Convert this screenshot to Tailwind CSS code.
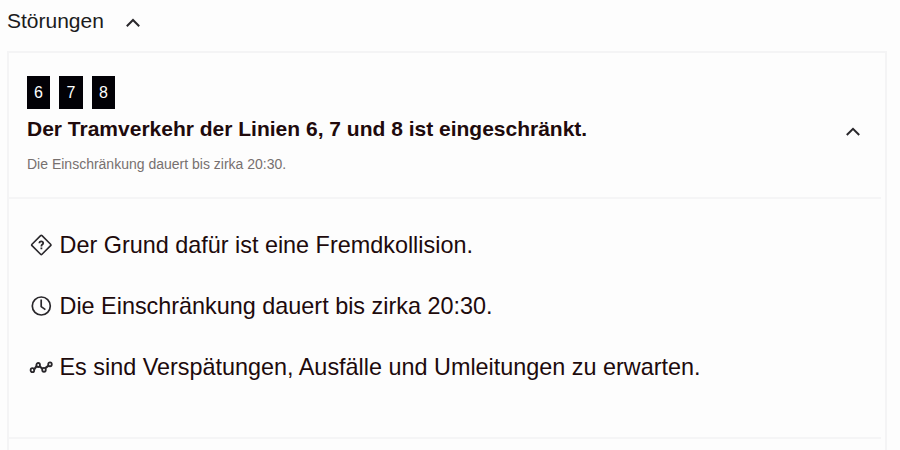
<!DOCTYPE html>
<html lang="de">
<head>
    <meta charset="UTF-8">
    <meta name="viewport" content="width=device-width, initial-scale=1.0">
    <title>Störungen</title>
    <script src="https://cdn.jsdelivr.net/npm/@tailwindcss/browser@4"></script>
</head>
<body class="h-[450px] overflow-hidden bg-[#fdfdfd] pl-[7px] font-['Liberation_Sans',Arial,sans-serif] text-[#200a0c]">
    <!-- Section header -->
    <header class="flex h-[51px] items-start gap-[22px] pt-[5px]">
        <h1 class="text-[21px] leading-8 text-[#1b1b20]">Störungen</h1>
        <svg class="mt-[13px] h-[9px] w-[14px]" viewBox="0 0 14 9" fill="none" stroke="#29272b" stroke-width="2">
            <path d="M.8 8.2 7 2 13.2 8.2" />
        </svg>
    </header>

    <main class="h-[420px] w-[880px] border-2 border-[#f4f4f5]">
        <!-- Disruption summary -->
        <section class="mr-1 flex h-[146px] justify-between border-b-2 border-[#f5f5f6] pt-[23px] pl-[18px]">
            <div>
                <div class="flex gap-[9px] text-base leading-[33px] text-white">
                    <span class="h-[33px] w-[23px] bg-[#020106] text-center leading-[33px]">6</span>
                    <span class="h-[33px] w-[24px] bg-[#020106] text-center leading-[33px]">7</span>
                    <span class="h-[33px] w-[23px] bg-[#020106] text-center leading-[33px]">8</span>
                </div>
                <h2 class="mt-1 text-[21px] leading-8 font-bold">Der Tramverkehr der Linien 6, 7 und 8 ist eingeschränkt.</h2>
                <p class="mt-[7px] text-[14px] leading-6 text-[#77706f]">Die Einschränkung dauert bis zirka 20:30.</p>
            </div>
            <svg class="mt-[51px] mr-[21px] h-[9px] w-[14px]" viewBox="0 0 14 9" fill="none" stroke="#29272b" stroke-width="2">
                <path d="M.8 8 7 1.8 13.2 8" />
            </svg>
        </section>

        <!-- Details -->
        <section class="mr-1 h-[240px] border-b-2 border-[#f5f5f6] pt-[26px] pl-[20px] text-[23.4px] leading-[40px]">
            <ul class="flex flex-col gap-[21px]">
                <li class="flex items-center gap-[6.5px]">
                    <svg class="h-6 w-6" viewBox="0 0 24 24" fill="none" stroke="#29272b" stroke-width="1.6" stroke-linejoin="round">
                        <path d="M11.6 2.6Q12.3 1.9 13 2.6L21.6 11.2Q22.3 11.9 21.6 12.6L13 21.2Q12.3 21.9 11.6 21.2L3 12.6Q2.3 11.9 3 11.2Z" />
                        <path d="M10.4 10.2Q10.3 8.3 12.2 8.3T14.2 10Q14.2 11 13 11.8Q12.4 12.3 12.4 13.5M12.4 14.5V16.3" stroke-width="1.8" />
                    </svg>
                    <span>Der Grund dafür ist eine Fremdkollision.</span>
                </li>
                <li class="flex items-center gap-[6.5px]">
                    <svg class="h-6 w-6" viewBox="0 0 24 24" fill="none" stroke="#29272b" stroke-width="1.7">
                        <circle cx="12.3" cy="12" r="9" />
                        <path d="M12.2 5.6V12.6L16.4 15.6" />
                    </svg>
                    <span>Die Einschränkung dauert bis zirka 20:30.</span>
                </li>
                <li class="flex items-center gap-[6.5px]">
                    <svg class="h-6 w-6" viewBox="0 0 24 24" fill="none" stroke="#29272b" stroke-width="1.8">
                        <ellipse cx="3.4" cy="15.2" rx="1.8" ry="2" />
                        <ellipse cx="9.2" cy="10" rx="1.8" ry="2" />
                        <ellipse cx="15" cy="14.8" rx="1.8" ry="2" />
                        <ellipse cx="21" cy="9.3" rx="1.8" ry="2" />
                        <path d="M5 14.6 7.6 11.2M10.6 11.2 13.4 13.8M16.3 13.2 19.6 10.6" stroke-width="2.2" />
                    </svg>
                    <span>Es sind Verspätungen, Ausfälle und Umleitungen zu erwarten.</span>
                </li>
            </ul>
        </section>
    </main>
</body>
</html>
